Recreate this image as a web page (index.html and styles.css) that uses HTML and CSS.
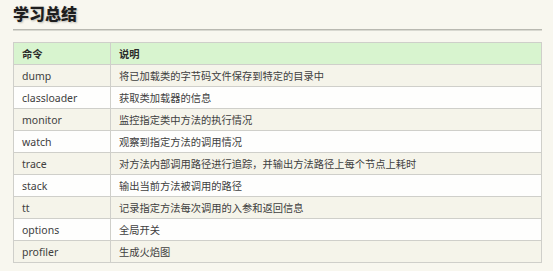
FILE: index.html
```html
<!DOCTYPE html>
<html lang="zh">
<head>
<meta charset="utf-8">
<title>学习总结</title>
<link rel="stylesheet" href="styles.css">
</head>
<body>
<div class="page">
  <h1 class="title">学习总结</h1>
  <div class="rule"></div>
  <table class="cmds">
    <thead>
      <tr><th class="c1">命令</th><th>说明</th></tr>
    </thead>
    <tbody>
      <tr><td class="c1">dump</td><td>将已加载类的字节码文件保存到特定的目录中</td></tr>
      <tr><td class="c1">classloader</td><td>获取类加载器的信息</td></tr>
      <tr><td class="c1">monitor</td><td>监控指定类中方法的执行情况</td></tr>
      <tr><td class="c1">watch</td><td>观察到指定方法的调用情况</td></tr>
      <tr><td class="c1">trace</td><td>对方法内部调用路径进行追踪，并输出方法路径上每个节点上耗时</td></tr>
      <tr><td class="c1">stack</td><td>输出当前方法被调用的路径</td></tr>
      <tr><td class="c1">tt</td><td>记录指定方法每次调用的入参和返回信息</td></tr>
      <tr><td class="c1">options</td><td>全局开关</td></tr>
      <tr><td class="c1">profiler</td><td>生成火焰图</td></tr>
    </tbody>
  </table>
</div>
</body>
</html>
```
FILE: styles.css
```css
html, body {
  margin: 0;
  padding: 0;
  background: #f8f7ef;
}
body {
  font-family: "Noto Sans", "Noto Sans CJK SC", sans-serif;
  color: #3a3a3a;
}
.page {
  padding: 3px 11px 0 13px;
}
.title {
  margin: 0;
  font-family: "Noto Sans CJK SC", sans-serif;
  font-size: 16px;
  line-height: 20px;
  font-weight: 900;
  color: #1e1e1e;
  text-shadow: 1px 1px 2px rgba(0,0,0,0.25);
}
.rule {
  margin-top: 6px;
  height: 0;
  border-top: 1px solid #b9b9b1;
  border-bottom: 1px solid #d9d9d1;
}
.cmds {
  margin-top: 11px;
  width: 100%;
  border-collapse: collapse;
  border: 1px solid #c3c3bd;
  font-size: 10.25px;
}
.cmds th, .cmds td {
  height: 21px;
  padding: 0 8px;
  text-align: left;
  border: 1px solid #cfcfca;
  line-height: 14px;
}
.cmds th {
  background: #d8f4cf;
  font-family: "Noto Sans CJK SC", sans-serif;
  font-weight: 700;
  color: #2a2a2a;
}
.cmds td {
  font-family: "Noto Sans", "Noto Sans CJK SC", sans-serif;
  color: #404040;
}
.cmds td.c1 {
  font-size: 10.5px;
}
.cmds .c1 {
  width: 80px;
}
.cmds tbody tr:nth-child(odd) td {
  background: #f5f4ea;
}
.cmds tbody tr:nth-child(even) td {
  background: #fefefd;
}
```
